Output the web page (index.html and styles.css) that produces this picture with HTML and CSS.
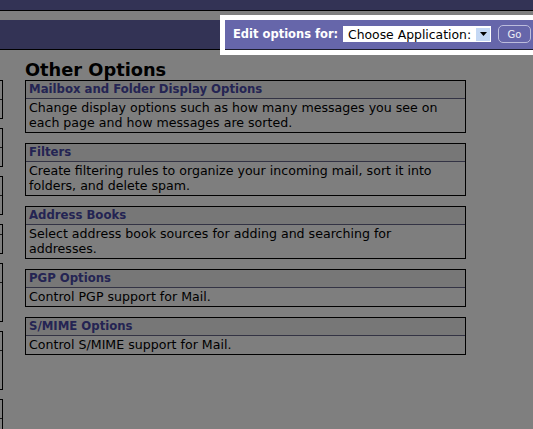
FILE: index.html
```html
<!DOCTYPE html>
<html>
<head>
<meta charset="utf-8">
<title>Other Options</title>
<link rel="stylesheet" href="styles.css">
</head>
<body>
<div class="topbar"></div>
<div class="navbar">
  <form class="appform">
    <span class="applabel">Edit options for:</span>
    <div class="fakeselect">
      <span class="fs-text">Choose Application:</span>
      <span class="fs-arrow"><svg width="7" height="4" viewBox="0 0 7 4"><path d="M0 0h7L3.5 4z" fill="#000"/></svg></span>
    </div>
    <button type="button" class="gobtn">Go</button>
  </form>
</div>
<div class="page">
  <div class="sidebar">
    <div class="sb-item"><div class="sb-head"></div><div class="sb-body"></div></div>
    <div class="sb-item"><div class="sb-head"></div><div class="sb-body"></div></div>
    <div class="sb-item"><div class="sb-head"></div><div class="sb-body"></div></div>
    <div class="sb-item"><div class="sb-head short"></div><div class="sb-body"></div></div>
    <div class="sb-item"><div class="sb-head"></div><div class="sb-body taller"></div></div>
    <div class="sb-item"><div class="sb-head"></div><div class="sb-body taller"></div></div>
    <div class="sb-item"><div class="sb-head"></div><div class="sb-body"></div></div>
  </div>
  <div class="content">
    <h1 class="title">Other Options</h1>
    <div class="opt">
      <div class="opt-head">Mailbox and Folder Display Options</div>
      <div class="opt-body">Change display options such as how many messages you see on each page and how messages are sorted.</div>
    </div>
    <div class="opt">
      <div class="opt-head">Filters</div>
      <div class="opt-body">Create filtering rules to organize your incoming mail, sort it into folders, and delete spam.</div>
    </div>
    <div class="opt">
      <div class="opt-head">Address Books</div>
      <div class="opt-body">Select address book sources for adding and searching for addresses.</div>
    </div>
    <div class="opt">
      <div class="opt-head">PGP Options</div>
      <div class="opt-body">Control PGP support for Mail.</div>
    </div>
    <div class="opt">
      <div class="opt-head">S/MIME Options</div>
      <div class="opt-body">Control S/MIME support for Mail.</div>
    </div>
  </div>
</div>
<div class="overlay"></div>
</body>
</html>
```
FILE: styles.css
```css
html, body {
  margin: 0;
  padding: 0;
  background: #ffffff;
  font-family: "DejaVu Sans", Verdana, sans-serif;
  color: #000;
  overflow: hidden;
  height: 429px;
}
.topbar {
  height: 10px;
  background: #6666aa;
  border-bottom: 1px solid #000;
  margin-bottom: 9px;
}
.navbar {
  display: flex;
  justify-content: flex-end;
  height: 29px;
  background: #6666aa;
  border-bottom: 1px solid #000;
}
.appform {
  position: relative;
  z-index: 2;
  margin: 0 0 -1px 0;
  width: 308px;
  box-sizing: border-box;
  display: flex;
  align-items: center;
  padding: 0 0 1px 8px;
  background: #6666aa;
  border-bottom: 1px solid #1c1c2c;
  outline: 5px solid #ffffff;
}
.applabel {
  color: #ffffff;
  font-weight: bold;
  font-size: 11.5px;
  width: 105px;
  margin-right: 5px;
  white-space: nowrap;
}
.fakeselect {
  display: flex;
  align-items: center;
  height: 16px;
  width: 148px;
  background: #fff;
  box-sizing: border-box;
  padding: 0 1px 0 5px;
}
.fs-text {
  flex: 1;
  font-size: 12.4px;
  color: #000;
  white-space: nowrap;
}
.fs-arrow {
  display: flex;
  align-items: center;
  justify-content: center;
  width: 14px;
  height: 13px;
  background: #c4d8f4;
}
.gobtn {
  margin-left: 7px;
  width: 33px;
  height: 18px;
  padding: 0;
  border: 1px solid #bcbcdc;
  border-radius: 5px;
  background: #6666aa;
  color: #eeeef4;
  font-family: "DejaVu Sans", Verdana, sans-serif;
  font-size: 10px;
}
.page {
  display: flex;
  align-items: flex-start;
}
.sidebar {
  width: 3px;
  padding-top: 30px;
  flex: none;
}
.sb-item {
  border: 1px solid #000;
  border-left: 0;
  margin-bottom: 9px;
}
.sb-head {
  height: 18px;
  border-bottom: 1px solid #333;
}
.sb-head.short { height: 9px; }
.sb-body { height: 18px; }
.sb-body.taller { height: 38px; }
.content {
  margin-left: 22px;
  width: 441px;
}
.title {
  margin: 10px 0 0 0;
  font-size: 17.8px;
  line-height: 20px;
  font-weight: bold;
}
.opt {
  border: 1px solid #000;
  margin-bottom: 10px;
}
.opt-head {
  background: #eeeeee;
  color: #4848a6;
  font-weight: bold;
  font-size: 11.7px;
  line-height: 15px;
  padding: 1px 3px 1px;
  border-bottom: 1px solid #666688;
}
.opt-body {
  background: #fdfdfd;
  font-size: 12.6px;
  line-height: 15px;
  padding: 1px 3px 2px;
}
.overlay {
  position: fixed;
  top: 0;
  left: 0;
  right: 0;
  bottom: 0;
  background: rgba(0, 0, 0, 0.5);
  z-index: 1;
}
```
